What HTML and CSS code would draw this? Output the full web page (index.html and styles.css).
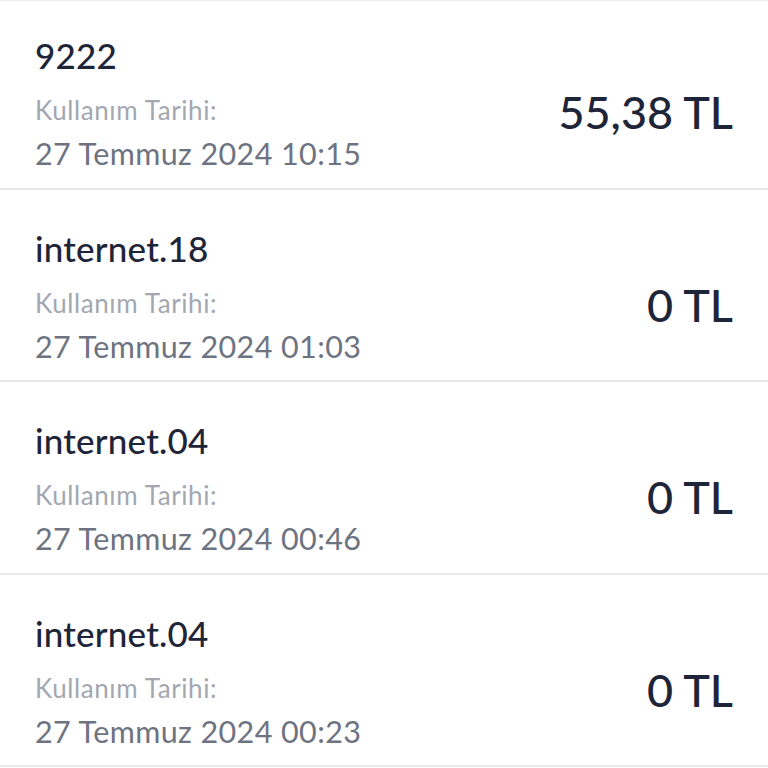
FILE: index.html
```html
<!DOCTYPE html>
<html lang="tr">
<head>
<meta charset="utf-8">
<link rel="stylesheet" href="styles.css">
</head>
<body>
<div class="page">
  <ul class="list">
    <li class="row">
      <div class="info">
        <div class="title">9222</div>
        <div class="label">Kullanım Tarihi:</div>
        <div class="date">27 Temmuz 2024 10:15</div>
      </div>
      <div class="amount">55,38 TL</div>
    </li>
    <li class="row">
      <div class="info">
        <div class="title">internet.18</div>
        <div class="label">Kullanım Tarihi:</div>
        <div class="date">27 Temmuz 2024 01:03</div>
      </div>
      <div class="amount">0 TL</div>
    </li>
    <li class="row">
      <div class="info">
        <div class="title">internet.04</div>
        <div class="label">Kullanım Tarihi:</div>
        <div class="date">27 Temmuz 2024 00:46</div>
      </div>
      <div class="amount">0 TL</div>
    </li>
    <li class="row">
      <div class="info">
        <div class="title">internet.04</div>
        <div class="label">Kullanım Tarihi:</div>
        <div class="date">27 Temmuz 2024 00:23</div>
      </div>
      <div class="amount">0 TL</div>
    </li>
  </ul>
</div>
</body>
</html>
```
FILE: styles.css
```css
html, body {
  margin: 0;
  padding: 0;
  background: #ffffff;
}
body {
  font-family: "Lato", "Noto Sans", sans-serif;
  width: 768px;
  height: 768px;
  overflow: hidden;
}
.page {
  border-top: 1px solid #eceef1;
}
.list {
  list-style: none;
  margin: -4px 0 0 0;
  padding: 0;
}
.row {
  display: flex;
  justify-content: space-between;
  align-items: flex-start;
  height: 190.5px;
  padding: 0 35px;
  border-bottom: 2px solid #e6e8ec;
}
.info {
  display: flex;
  flex-direction: column;
  padding-top: 38px;
}
.title {
  font-size: 35px;
  line-height: 40px;
  font-weight: 500;
  letter-spacing: 0.2px;
  color: #1f2538;
}
.label {
  margin-top: 18px;
  font-size: 26px;
  line-height: 34px;
  letter-spacing: 0.6px;
  color: #a3a7b0;
}
.date {
  margin-top: 9px;
  font-size: 30.5px;
  line-height: 34px;
  letter-spacing: 0.4px;
  color: #6e7381;
}
.amount {
  padding-top: 90px;
  font-size: 45px;
  line-height: 50px;
  font-weight: 500;
  color: #1f2538;
}
```
